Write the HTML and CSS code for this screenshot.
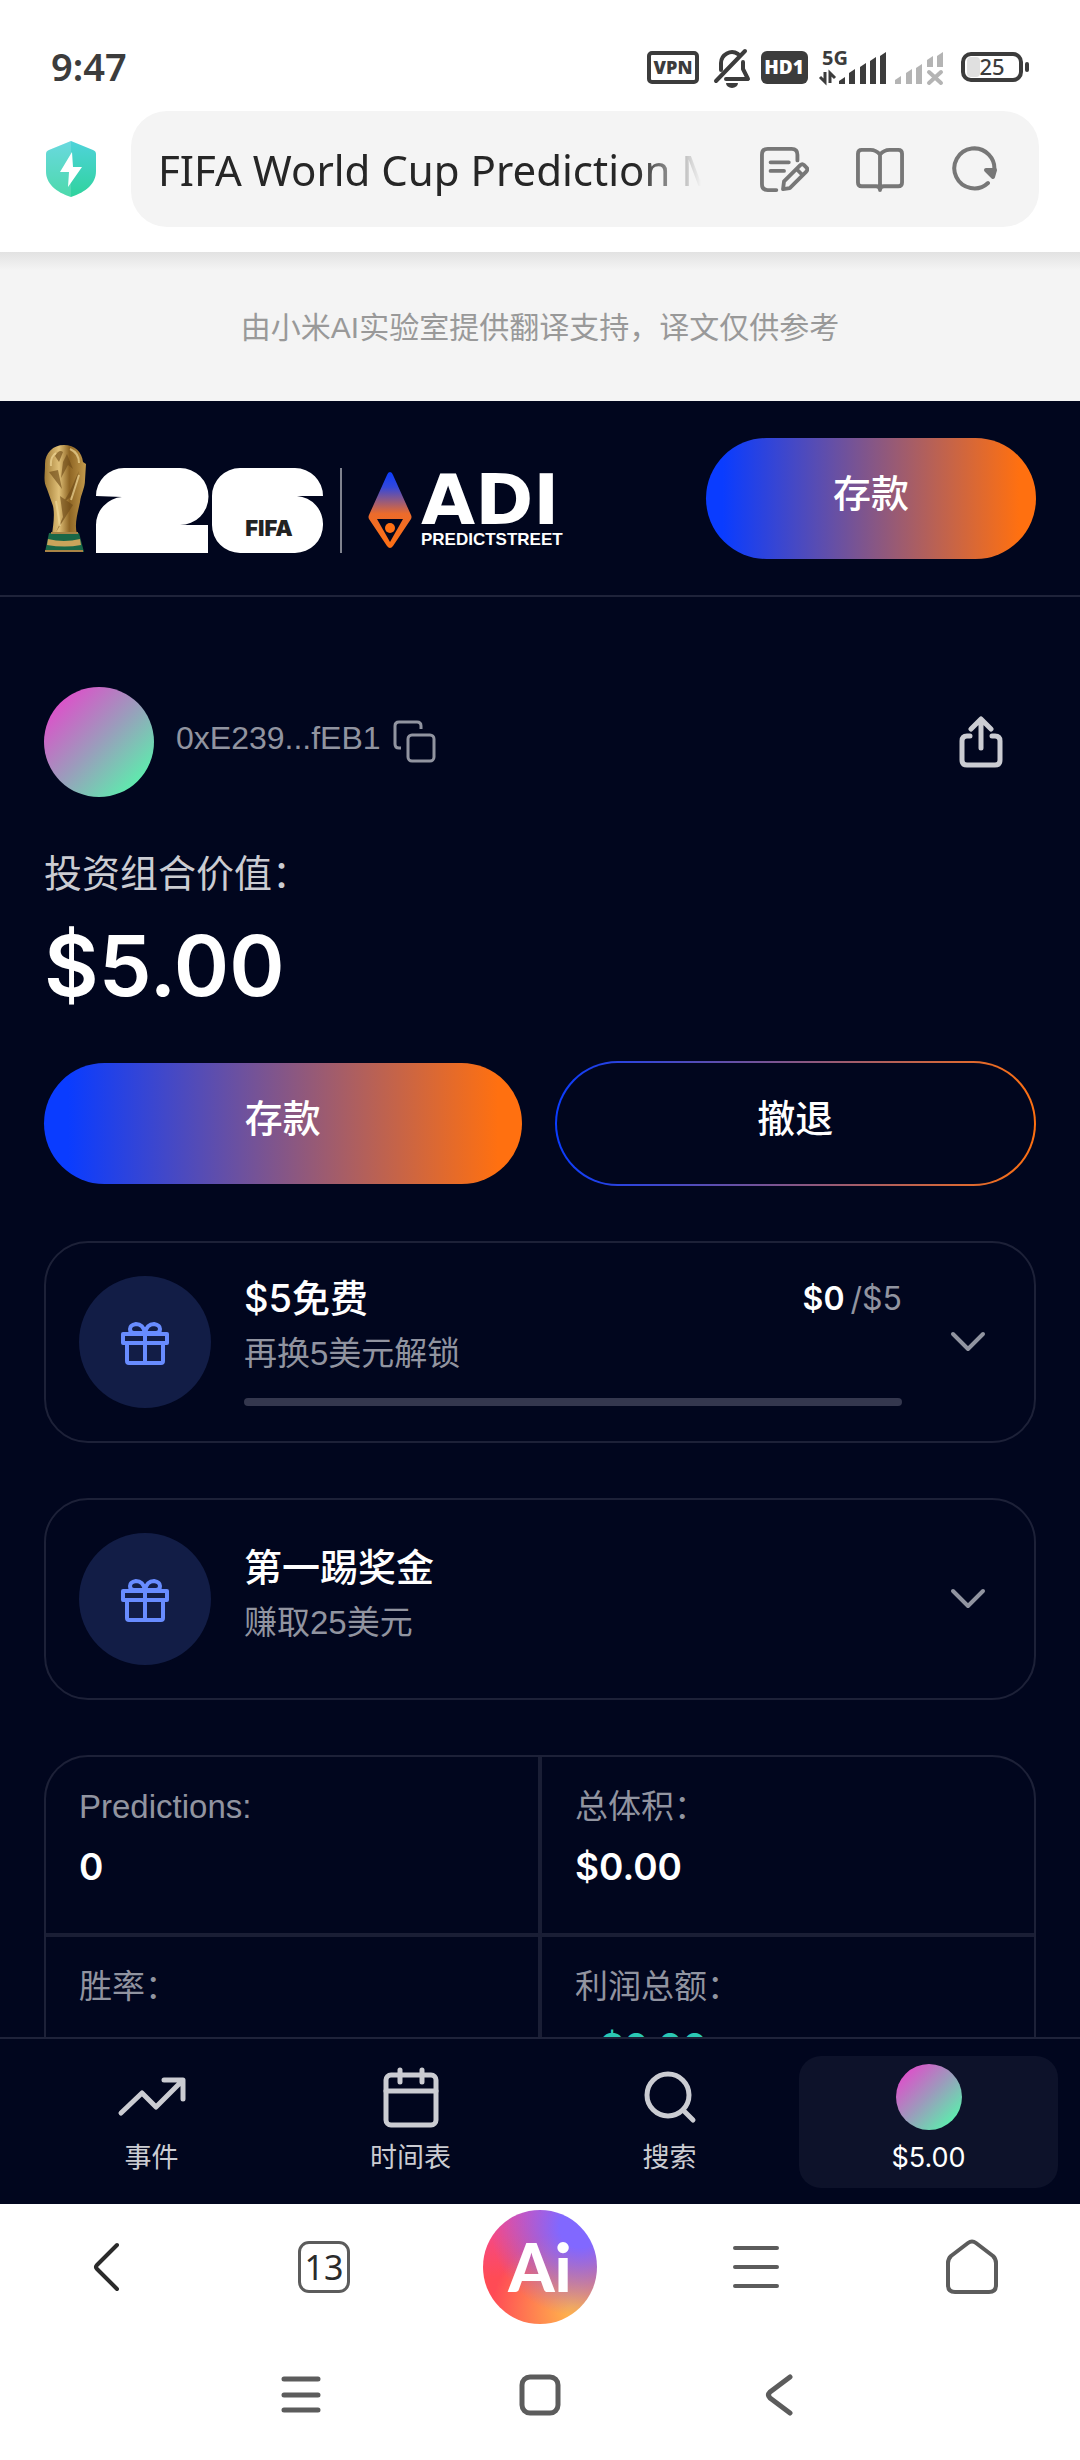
FILE: index.html
```html
<!DOCTYPE html>
<html lang="zh-CN">
<head>
    <meta charset="UTF-8">
    <meta name="viewport" content="width=device-width, initial-scale=1.0">
    <title>FIFA World Cup Prediction Market</title>
    <link rel="stylesheet" href="styles.css">
</head>
<body>
    <div class="screen">
        <div class="status-bar">
            <span class="time">9:47</span>
            <svg class="status-icons" width="386" height="48" viewBox="0 -6 386 48" aria-hidden="true">
                <rect x="3" y="5" width="48" height="29" rx="3" fill="none" stroke="#3c3c3c" stroke-width="4"/>
                <text x="27" y="26" class="badge-text" fill="#3c3c3c" font-size="18">VPN</text>
                <g fill="none" stroke="#3c3c3c" stroke-width="4" stroke-linecap="round" stroke-linejoin="round">
                    <path d="M70 33 99 3"/>
                    <path d="M75 22V15a11 11 0 0 1 17-9"/>
                    <path d="M97 14v7l5 10H80"/>
                </g>
                <path d="M80 35h12a6 5 0 0 1-12 0z" fill="#3c3c3c"/>
                <rect x="115" y="3" width="47" height="33" rx="6" fill="#3c3c3c"/>
                <text x="138" y="26" class="badge-text" fill="#fff" font-size="19">HD1</text>
                <text x="189" y="17" class="signal-text" fill="#3c3c3c" font-size="20">5G</text>
                <path d="M179 24v10l-5-5M184 35V25l5 5" fill="none" stroke="#3c3c3c" stroke-width="3"/>
                <path d="M193 36v-3l6-4v7zM203 36V25l6-4v15zM214 36V19l6-4v21zM224 36V13l6-4v27zM234 36V8l6-4v32z" fill="#3c3c3c"/>
                <path d="M249 36v-4l6-4v8zM260 36V25l6-4v15zM270 36V20l6-4v20zM281 19v-7l6-4v11zM291 19V8l6-4v15z" fill="#b4b4b4"/>
                <path d="M283 24 295 35M295 24 283 35" stroke="#b4b4b4" stroke-width="4" stroke-linecap="round"/>
                <rect x="317" y="6" width="58" height="26" rx="8" fill="none" stroke="#3c3c3c" stroke-width="4"/>
                <rect x="321" y="9" width="13" height="20" rx="4" fill="#e0e0e0"/>
                <rect x="379" y="14" width="4" height="10" rx="2" fill="#3c3c3c"/>
                <text x="346" y="27" class="battery-text" fill="#3c3c3c" font-size="22">25</text>
            </svg>
        </div>

        <div class="address-row">
            <svg class="shield" width="50" height="56" viewBox="0 0 50 56" aria-hidden="true">
                <defs>
                    <linearGradient id="shield" x1="0" y1="0" x2="0" y2="1">
                        <stop offset="0" stop-color="#4fd3da"/>
                        <stop offset="1" stop-color="#2fd39d"/>
                    </linearGradient>
                </defs>
                <path d="M25 0 47 9q3 1 3 4v17c0 13-10 21-25 26C10 51 0 43 0 30V13q0-3 3-4z" fill="url(#shield)"/>
                <path d="M25 0 3 9q-3 1-3 4v17c0 13 10 21 25 26z" fill="#fff" opacity=".15"/>
                <path d="M26 11 14 31h9l-1 15 14-20h-9z" fill="#fff"/>
            </svg>
            <div class="address-bar">
                <span class="page-title">FIFA World Cup Prediction Market</span>
                <button class="icon-button" aria-label="笔记">
                    <svg width="50" height="46" viewBox="0 0 52 48">
                        <path d="M40 15V9q0-6-6-6H9Q3 3 3 9v31q0 6 6 6h9M12 17h19M12 26h14"/>
                        <path d="m25 45 1-8 17-17q2-2 4 0l3 3q1 2-1 4L32 44z M39 24l6 6"/>
                    </svg>
                </button>
                <button class="icon-button" aria-label="阅读模式">
                    <svg width="50" height="46" viewBox="0 0 52 48">
                        <path d="M26 9q-4-5-10-5H7Q3 4 3 8v30q0 4 4 4h15q4 0 4 4 0-4 4-4h15q4 0 4-4V8q0-4-4-4h-9q-6 0-10 5zV43"/>
                    </svg>
                </button>
                <button class="icon-button" aria-label="刷新">
                    <svg width="46" height="48" viewBox="0 0 46 48">
                        <path d="M37 38A20 20 0 1 1 43 27"/>
                        <path d="M35 25h9l-2 7z" fill="#777"/>
                    </svg>
                </button>
            </div>
        </div>

        <p class="notice">由小米AI实验室提供翻译支持，译文仅供参考</p>

        <main class="app">
            <header class="app-header">
                <a class="logo" href="#" aria-label="FIFA 26 ADI Predictstreet">
                    <svg width="526" height="110" viewBox="0 0 526 110">
                        <defs>
                            <linearGradient id="gold" x1="0" y1="0" x2="1" y2="0">
                                <stop offset="0" stop-color="#a07a35"/>
                                <stop offset=".35" stop-color="#e0c078"/>
                                <stop offset=".6" stop-color="#8e6524"/>
                                <stop offset="1" stop-color="#c39a4c"/>
                            </linearGradient>
                            <linearGradient id="diamond" x1="0" y1="0" x2="0" y2="1">
                                <stop offset="0" stop-color="#0a3cff"/>
                                <stop offset=".2" stop-color="#3448da"/>
                                <stop offset=".55" stop-color="#ec6b2b"/>
                                <stop offset="1" stop-color="#ff7014"/>
                            </linearGradient>
                        </defs>
                        <!-- trophy -->
                        <path d="M20 1C9 1 1 9 1 20c0 12-2 17 2 25l6 17c2 9 0 21-1 28h25c-3-10 1-22 3-32 1-8 5-14 5-22l1-16-3-2C38 8 31 1 20 1z" fill="url(#gold)"/>
                        <path d="M11 12q4-7 8-4l-4 10zM23 10l6 15-5-4-7 13 2-16zM5 28l13 17-4-19M35 27l-9 20-7 12 10-8M16 52l3 21-7 15 17-27M31 50l-6 31M8 45l9 10" fill="#6f4b18" opacity=".65"/>
                        <path d="M7 22q-1-9 5-13M26 5q9 4 9 14M12 57l4 25M35 31l-8 25" fill="none" stroke="#f0d797" stroke-width="2" opacity=".7"/>
                        <path d="M5 89h30l5 19H1z" fill="#196747"/>
                        <path d="M4 95q16 4 32 0l1 6q-16 3-34 0z" fill="#caa45b"/>
                        <path d="M1 106h38v2H1zM7 88h27v2H7z" fill="#a98446"/>
                        <!-- 26 emblem -->
                        <g fill="#fff">
                            <path d="M52 52a28 28 0 0 1 28-28h56a28 28 0 0 1 0 57h28v28H52V81a28 28 0 0 1 26-28z"/>
                            <path d="M168 52a28 28 0 0 1 28-28h55a28 28 0 0 1 28 28h-26a28 28 0 0 1 26 29 28 28 0 0 1-28 28h-55a28 28 0 0 1-28-28z"/>
                        </g>
                        <text x="225" y="92" class="fifa-text">FIFA</text>
                        <path d="M297 24v85" stroke="#fff" stroke-width="1"/>
                        <!-- ADI mark -->
                        <path d="M346 28q-2 0-3 3l-18 40q-1 2 0 4l18 27q3 4 6 0l18-27q1-2 0-4l-18-40q-1-3-3-3z" fill="url(#diamond)"/>
                        <path d="M333 75h26l-13 23z" fill="#01061e"/>
                        <circle cx="346" cy="84" r="5" fill="#ff7014"/>
                        <text x="377" y="80" class="adi-text">ADI</text>
                        <text x="377" y="101" class="street-text">PREDICTSTREET</text>
                    </svg>
                </a>
                <button class="btn btn-fill btn-header">存款</button>
            </header>

            <section class="profile">
                <div class="user-row">
                    <span class="avatar"></span>
                    <span class="wallet">0xE239...fEB1</span>
                    <button class="copy" aria-label="复制">
                        <svg width="44" height="44" viewBox="0 0 44 44">
                            <rect x="15" y="15" width="26" height="26" rx="4"/>
                            <path d="M28 9V6q0-4-4-4H6Q2 2 2 6v18q0 4 4 4h2"/>
                        </svg>
                    </button>
                    <button class="share" aria-label="分享">
                        <svg width="44" height="52" viewBox="0 0 44 52">
                            <path d="M22 32V4M12 13 22 3l10 10M11 20H8q-5 0-5 5v19q0 5 5 5h28q5 0 5-5V25q0-5-5-5h-3"/>
                        </svg>
                    </button>
                </div>
                <p class="portfolio-label">投资组合价值：</p>
                <p class="portfolio-value">$5.00</p>
                <div class="actions">
                    <button class="btn btn-fill">存款</button>
                    <button class="btn btn-outline">撤退</button>
                </div>
            </section>

            <section class="card">
                <span class="card-icon">
                    <svg width="50" height="50" viewBox="0 0 50 50">
                        <path d="M3 17h44v9H3zM7 26h36v18q0 2-2 2H9q-2 0-2-2zM25 17v29M25 16H14q-4 0-4-4t6-5c5 0 8 4 9 9zM25 16h11q4 0 4-4t-6-5c-5 0-8 4-9 9z"/>
                    </svg>
                </span>
                <div class="card-body">
                    <div class="card-top">
                        <h2>$5免费</h2>
                        <p class="amount"><strong>$0</strong><span>/$5</span></p>
                    </div>
                    <p class="card-sub">再换5美元解锁</p>
                    <div class="progress" role="progressbar" aria-label="解锁进度" aria-valuenow="0" aria-valuemin="0" aria-valuemax="5"></div>
                </div>
                <button class="toggle" aria-label="展开">
                    <svg width="36" height="22" viewBox="0 0 36 22"><path d="M3 3l15 15L33 3"/></svg>
                </button>
            </section>

            <section class="card">
                <span class="card-icon">
                    <svg width="50" height="50" viewBox="0 0 50 50">
                        <path d="M3 17h44v9H3zM7 26h36v18q0 2-2 2H9q-2 0-2-2zM25 17v29M25 16H14q-4 0-4-4t6-5c5 0 8 4 9 9zM25 16h11q4 0 4-4t-6-5c-5 0-8 4-9 9z"/>
                    </svg>
                </span>
                <div class="card-body">
                    <h2>第一踢奖金</h2>
                    <p class="card-sub">赚取25美元</p>
                </div>
                <button class="toggle" aria-label="展开">
                    <svg width="36" height="22" viewBox="0 0 36 22"><path d="M3 3l15 15L33 3"/></svg>
                </button>
            </section>

            <dl class="stats">
                <div class="stat"><dt>Predictions:</dt><dd>0</dd></div>
                <div class="stat"><dt>总体积：</dt><dd>$0.00</dd></div>
                <div class="stat"><dt>胜率：</dt><dd></dd></div>
                <div class="stat"><dt>利润总额：</dt><dd class="gain">+$0.00</dd></div>
            </dl>
        </main>

        <nav class="tabs">
            <a class="tab" href="#">
                <svg width="72" height="66" viewBox="0 0 72 66"><path d="M5 49 26 29l14 14L66 17M48 16h19v19"/></svg>
                <span>事件</span>
            </a>
            <a class="tab" href="#">
                <svg width="72" height="66" viewBox="0 0 72 66"><rect x="11" y="11" width="50" height="50" rx="5"/><path d="M11 27h50M25 6v12M47 6v12"/></svg>
                <span>时间表</span>
            </a>
            <a class="tab" href="#">
                <svg width="72" height="66" viewBox="0 0 72 66"><circle cx="34" cy="31" r="21"/><path d="m49 46 10 10"/></svg>
                <span>搜索</span>
            </a>
            <a class="tab active" href="#">
                <span class="avatar avatar-small"></span>
                <span class="balance">$5.00</span>
            </a>
        </nav>

        <div class="browser-bar">
            <button aria-label="后退">
                <svg width="50" height="52" viewBox="0 0 50 52"><path d="M34 4 14 24q-2 2 0 4l20 20" stroke="#2b2b2b"/></svg>
            </button>
            <button class="tab-count" aria-label="标签页"><span>13</span></button>
            <button class="ai" aria-label="Ai">Ai</button>
            <button aria-label="菜单">
                <svg width="50" height="52" viewBox="0 0 50 52"><path d="M4 7h42M4 26h42M4 45h42"/></svg>
            </button>
            <button aria-label="主页">
                <svg width="52" height="56" viewBox="0 0 52 56"><path d="M22 4q4-3 8 0l17 13q3 3 3 7v22q0 7-7 7H9q-7 0-7-7V24q0-4 3-7z"/></svg>
            </button>
        </div>

        <div class="system-bar">
            <button aria-label="最近任务">
                <svg width="42" height="42" viewBox="0 0 42 42"><path d="M4 5h34M4 21h34M4 36h34"/></svg>
            </button>
            <button aria-label="桌面">
                <svg width="42" height="42" viewBox="0 0 42 42"><rect x="3" y="3" width="36" height="36" rx="8"/></svg>
            </button>
            <button aria-label="返回">
                <svg width="42" height="42" viewBox="0 0 42 42"><path d="M32 3 12 18q-3 3 0 6l20 15"/></svg>
            </button>
        </div>
    </div>
</body>
</html>
```
FILE: styles.css
```css
* {
    margin: 0;
    padding: 0;
    box-sizing: border-box;
}

body {
    font-family: 'Liberation Sans', 'Noto Sans CJK SC', sans-serif;
    background: #fff;
    color: #fff;
}

button {
    border: none;
    background: none;
    color: inherit;
    font-family: inherit;
    cursor: pointer;
}

a {
    color: inherit;
    text-decoration: none;
}

svg {
    display: block;
}

.screen {
    height: 100vh;
    display: flex;
    flex-direction: column;
}

/* phone status bar */
.status-bar {
    display: flex;
    justify-content: space-between;
    align-items: center;
    padding: 42px 48px 21px 51px;
    color: #3c3c3c;
}

.time {
    font-family: 'Noto Sans', sans-serif;
    font-size: 38px;
    font-weight: 600;
    line-height: 48px;
}

.badge-text,
.signal-text {
    font-family: 'Open Sans', sans-serif;
    font-weight: 800;
    text-anchor: middle;
}

.signal-text {
    font-weight: 700;
}

.battery-text {
    font-family: 'Noto Sans', sans-serif;
    font-weight: 500;
    text-anchor: middle;
}

/* address bar */
.address-row {
    display: flex;
    align-items: center;
    gap: 35px;
    padding: 0 41px 25px 46px;
}

.address-bar {
    flex: 1;
    min-width: 0;
    display: flex;
    align-items: center;
    gap: 46px;
    height: 116px;
    padding: 0 42px 0 27px;
    border-radius: 36px;
    background: #f4f4f4;
}

.page-title {
    flex: 1;
    min-width: 0;
    margin-right: 12px;
    overflow: hidden;
    white-space: nowrap;
    font-family: 'Noto Sans', sans-serif;
    font-size: 42px;
    color: #262626;
    mask-image: linear-gradient(to right, #000 88%, transparent);
}

.icon-button svg {
    fill: none;
    stroke: #777;
    stroke-width: 4;
    stroke-linecap: round;
    stroke-linejoin: round;
}

.notice {
    padding: 52px 0 49px;
    background: linear-gradient(#e2e2e2, #f4f4f4 18px);
    color: #999;
    font-size: 30px;
    line-height: 48px;
    text-align: center;
}

/* page */
.app {
    flex: 1;
    min-height: 0;
    overflow: hidden;
    background: #01061e;
}

.app-header {
    display: flex;
    justify-content: space-between;
    align-items: center;
    padding: 37px 44px 36px;
    border-bottom: 2px solid #1f233a;
}

.fifa-text {
    font: 900 22px Inter, sans-serif;
    text-anchor: middle;
    fill: #222;
}

.adi-text {
    font: bold 70px 'DejaVu Sans', sans-serif;
    fill: #fff;
}

.street-text {
    font: bold 17px 'Liberation Sans', sans-serif;
    fill: #fff;
}

.btn {
    flex: 1;
    height: 121px;
    padding-bottom: 16px;
    border-radius: 64px;
    font-size: 38px;
    font-weight: 500;
}

.btn-fill {
    background: linear-gradient(to right, #0a3cff 5%, #ff7010 95%);
}

.btn-header {
    flex: 0 0 330px;
}

.btn-outline {
    height: 125px;
    border: 2px solid transparent;
    background: linear-gradient(#01061e, #01061e) padding-box,
        linear-gradient(to right, #0a3cff, #ff7010) border-box;
}

.profile {
    padding: 90px 44px 0;
}

.user-row {
    display: flex;
    align-items: center;
}

.avatar {
    width: 110px;
    height: 110px;
    border-radius: 50%;
    background: linear-gradient(135deg, #e24bcb 10%, #9b9cbc 50%, #58f3ac 90%);
}

.avatar-small {
    width: 66px;
    height: 66px;
}

.wallet {
    margin: 0 12px 0 22px;
    padding-bottom: 8px;
    font-size: 32px;
    line-height: 44px;
    color: #9194a0;
}

.copy svg {
    fill: none;
    stroke: #9194a0;
    stroke-width: 3;
}

.share {
    margin-left: auto;
    padding: 0 33px;
}

.share svg {
    fill: none;
    stroke: #cbccd2;
    stroke-width: 5;
    stroke-linecap: round;
    stroke-linejoin: round;
}

.portfolio-label {
    margin-top: 49px;
    font-size: 38px;
    line-height: 56px;
    color: #cbccd2;
}

.portfolio-value {
    margin-top: 8px;
    font-family: Inter, sans-serif;
    font-size: 84px;
    font-weight: 600;
    line-height: 112px;
}

.actions {
    display: flex;
    align-items: center;
    gap: 33px;
    margin-top: 39px;
}

.card {
    display: flex;
    align-items: center;
    gap: 33px;
    min-height: 202px;
    margin: 55px 44px 0;
    padding: 24px 33px;
    border: 2px solid #1d2138;
    border-radius: 44px;
}

.card-icon {
    display: flex;
    justify-content: center;
    align-items: center;
    width: 132px;
    height: 132px;
    border-radius: 50%;
    background: #121d46;
}

.card-icon svg {
    fill: none;
    stroke: #688cff;
    stroke-width: 4;
    stroke-linejoin: round;
}

.card-body {
    flex: 1;
    padding-bottom: 8px;
}

.card-top {
    display: flex;
    justify-content: space-between;
    align-items: center;
}

.card h2 {
    font-family: Inter, 'Noto Sans CJK SC', sans-serif;
    font-size: 38px;
    font-weight: 500;
    line-height: 56px;
}

.amount {
    display: flex;
    gap: 6px;
    font-family: Inter, sans-serif;
    font-size: 32px;
    color: #9194a0;
}

.amount strong {
    color: #fff;
    font-weight: 600;
}

.card-sub {
    font-size: 33px;
    line-height: 56px;
    color: #9194a0;
}

.progress {
    height: 8px;
    margin-top: 16px;
    border-radius: 4px;
    background: #34374e;
}

.toggle {
    padding: 0 15px;
}

.toggle svg {
    fill: none;
    stroke: #9194a0;
    stroke-width: 4;
    stroke-linecap: round;
    stroke-linejoin: round;
}

/* the grid gap shows through as the divider lines */
.stats {
    display: grid;
    grid-template-columns: 1fr 1fr;
    gap: 4px;
    margin: 55px 44px;
    border: 2px solid #1d2138;
    border-radius: 44px;
    background: #1a1e35;
    overflow: hidden;
}

.stat {
    min-height: 176px;
    padding: 26px 33px;
    background: #01061e;
}

.stat dt {
    font-size: 33px;
    line-height: 48px;
    color: #9194a0;
}

.stat dd {
    margin-top: 12px;
    font-family: Inter, sans-serif;
    font-size: 37px;
    font-weight: 600;
    line-height: 48px;
}

.stat .gain {
    color: #2bc8b4;
}

/* app tabs */
.tabs {
    display: grid;
    grid-template-columns: repeat(4, 1fr);
    padding: 17px 22px 16px;
    border-top: 2px solid #1f233a;
    background: #01061e;
}

.tab {
    display: flex;
    flex-direction: column;
    align-items: center;
    gap: 8px;
    height: 132px;
    padding-top: 8px;
    border-radius: 22px;
    font-size: 27px;
    line-height: 40px;
    color: #cbccd2;
}

.tab svg {
    fill: none;
    stroke: #cbccd2;
    stroke-width: 5;
    stroke-linecap: round;
    stroke-linejoin: round;
}

.tab.active {
    background: #0d122a;
    color: #fff;
}

.balance {
    font-family: Inter, sans-serif;
    font-size: 27px;
}

/* browser and system buttons */
.browser-bar {
    display: grid;
    grid-template-columns: repeat(5, 1fr);
    justify-items: center;
    align-items: center;
    height: 126px;
    color: #2b2b2b;
}

.browser-bar svg,
.system-bar svg {
    fill: none;
    stroke: #5c5c5c;
    stroke-width: 4;
    stroke-linecap: round;
    stroke-linejoin: round;
}

.tab-count {
    width: 52px;
    height: 52px;
    border: 3px solid #5c5c5c;
    border-radius: 11px;
    font-family: 'Noto Sans', sans-serif;
    font-size: 34px;
    line-height: 44px;
}

.ai {
    width: 114px;
    height: 114px;
    border-radius: 50%;
    background: radial-gradient(circle at 85% 15%, #8168ff 15%, transparent 65%),
        radial-gradient(circle at 80% 90%, #ffb04c 5%, transparent 60%),
        linear-gradient(#f0489e, #ff4b55 60%);
    color: #fff;
    font-family: Lato, sans-serif;
    font-size: 66px;
    font-weight: 900;
    line-height: 100px;
}

.system-bar {
    display: grid;
    grid-template-columns: repeat(3, 239px);
    justify-content: center;
    justify-items: center;
    padding: 44px 0;
}

.system-bar svg {
    stroke-width: 5;
}
```
